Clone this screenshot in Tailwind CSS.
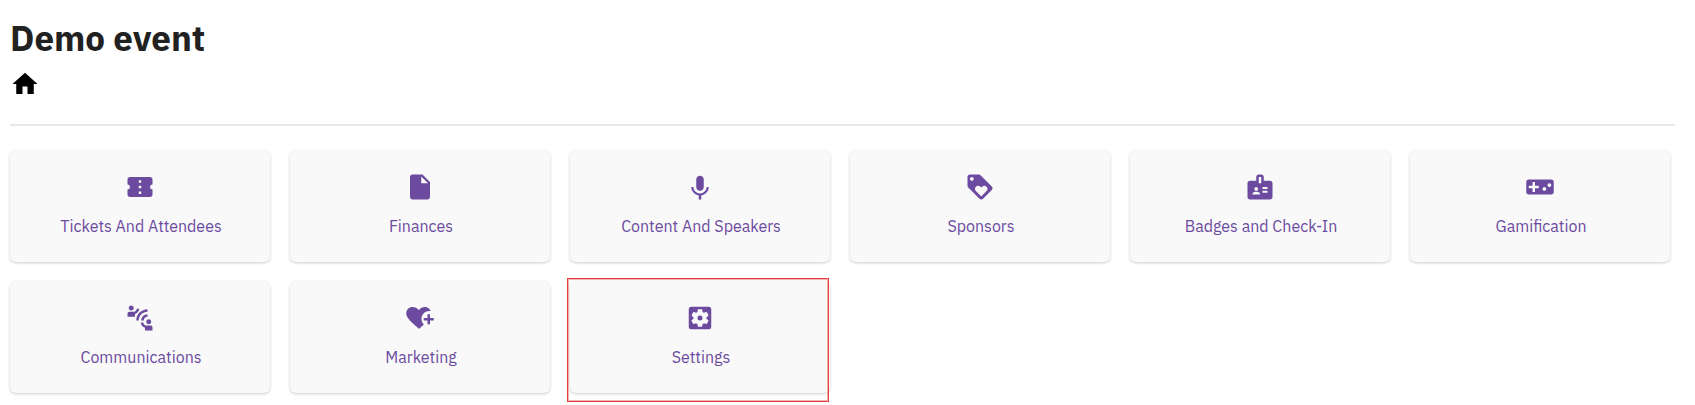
<!DOCTYPE html>
<html lang="en">
<head>
    <meta charset="UTF-8">
    <meta name="viewport" content="width=device-width, initial-scale=1.0">
    <title>Demo event</title>
    <script src="https://cdn.jsdelivr.net/npm/@tailwindcss/browser@4"></script>
</head>
<body class="bg-white font-['IBM_Plex_Sans','Open_Sans',sans-serif] text-[#212121]">
    <div class="pl-2.5 pr-5 pt-3.5 pb-3">
        <header>
            <h1 class="text-[35px] leading-12 font-bold">Demo event</h1>
            <nav class="mt-[7px]">
                <a href="#" aria-label="Home" class="inline-block align-top text-black">
                    <svg class="size-[30px]" viewBox="0 0 24 24" fill="currentColor"><path d="M10 20v-6h4v6h5v-8h3L12 3 2 12h3v8z"/></svg>
                </a>
            </nav>
        </header>

        <hr class="mt-[25px] mb-6 border-t-2 border-[#e8e8e8]">

        <main class="grid grid-cols-[repeat(auto-fill,minmax(240px,1fr))] gap-x-5 gap-y-[19px] pr-[5px] text-center text-base text-[#6b4a9f]">
            <a href="#" class="flex flex-col items-center gap-3 rounded-md bg-[#f9f9f9] pt-[22px] pb-6 shadow-[0_1px_3px_rgba(0,0,0,0.2)]">
                <svg class="size-[30px]" viewBox="0 0 24 24" fill="currentColor"><path d="M22 10V6c0-1.11-.9-2-2-2H4c-1.1 0-1.99.89-1.99 2v4c1.1 0 1.99.9 1.99 2s-.89 2-2 2v4c0 1.1.9 2 2 2h16c1.1 0 2-.9 2-2v-4c-1.1 0-2-.9-2-2s.9-2 2-2zm-9 7.5h-2v-2h2v2zm0-4.5h-2v-2h2v2zm0-4.5h-2v-2h2v2z"/></svg>
                <span class="pl-0.5">Tickets And Attendees</span>
            </a>
            <a href="#" class="flex flex-col items-center gap-3 rounded-md bg-[#f9f9f9] pt-[22px] pb-6 shadow-[0_1px_3px_rgba(0,0,0,0.2)]">
                <svg class="size-[30px]" viewBox="0 0 24 24" fill="currentColor"><path d="M6 2c-1.1 0-1.99.9-1.99 2L4 20c0 1.1.89 2 1.99 2H18c1.1 0 2-.9 2-2V8l-6-6H6zm7 7V3.5L18.5 9H13z"/></svg>
                <span class="pl-0.5">Finances</span>
            </a>
            <a href="#" class="flex flex-col items-center gap-3 rounded-md bg-[#f9f9f9] pt-[22px] pb-6 shadow-[0_1px_3px_rgba(0,0,0,0.2)]">
                <svg class="size-[30px]" viewBox="0 0 24 24" fill="currentColor"><path d="M12 15c1.66 0 2.99-1.34 2.99-3L15 6c0-1.66-1.34-3-3-3S9 4.34 9 6v6c0 1.66 1.34 3 3 3zm5.3-3c0 3-2.54 5.1-5.3 5.1S6.7 15 6.7 12H5c0 3.42 2.72 6.23 6 6.72V22h2v-3.28c3.28-.48 6-3.3 6-6.72h-1.7z"/></svg>
                <span class="pl-0.5">Content And Speakers</span>
            </a>
            <a href="#" class="flex flex-col items-center gap-3 rounded-md bg-[#f9f9f9] pt-[22px] pb-6 shadow-[0_1px_3px_rgba(0,0,0,0.2)]">
                <svg class="size-[30px]" viewBox="0 0 24 24" fill="currentColor"><path d="M21.41 11.58l-9-9C12.05 2.22 11.55 2 11 2H4c-1.1 0-2 .9-2 2v7c0 .55.22 1.05.59 1.42l9 9c.36.36.86.58 1.41.58.55 0 1.05-.22 1.41-.59l7-7c.37-.36.59-.86.59-1.41 0-.55-.23-1.06-.59-1.42zM5.5 7C4.67 7 4 6.33 4 5.5S4.67 4 5.5 4 7 4.67 7 5.5 6.33 7 5.5 7zm11.77 8.27L13 19.54l-4.27-4.27C8.28 14.81 8 14.19 8 13.5c0-1.38 1.12-2.5 2.5-2.5.69 0 1.32.28 1.77.74l.73.72.73-.73c.45-.45 1.08-.73 1.77-.73 1.38 0 2.5 1.12 2.5 2.5 0 .69-.28 1.32-.73 1.77z"/></svg>
                <span class="pl-0.5">Sponsors</span>
            </a>
            <a href="#" class="flex flex-col items-center gap-3 rounded-md bg-[#f9f9f9] pt-[22px] pb-6 shadow-[0_1px_3px_rgba(0,0,0,0.2)]">
                <svg class="size-[30px]" viewBox="0 0 24 24" fill="currentColor"><path fill-rule="evenodd" d="M20 7h-5V4c0-1.1-.9-2-2-2h-2c-1.1 0-2 .9-2 2v3H4c-1.1 0-2 .9-2 2v11c0 1.1.9 2 2 2h16c1.1 0 2-.9 2-2V9c0-1.1-.9-2-2-2zM9 12c.83 0 1.5.67 1.5 1.5S9.83 15 9 15s-1.5-.67-1.5-1.5S8.17 12 9 12zm3 6H6v-.75c0-1 2-1.5 3-1.5s3 .5 3 1.5V18zm1-9h-2V4h2v5zm5 7.5h-4V15h4v1.5zm0-3h-4V12h4v1.5z"/></svg>
                <span class="pl-0.5">Badges and Check-In</span>
            </a>
            <a href="#" class="flex flex-col items-center gap-3 rounded-md bg-[#f9f9f9] pt-[22px] pb-6 shadow-[0_1px_3px_rgba(0,0,0,0.2)]">
                <svg class="size-[30px]" viewBox="0 0 24 24" fill="currentColor"><path d="M21 6H3c-1.1 0-2 .9-2 2v8c0 1.1.9 2 2 2h18c1.1 0 2-.9 2-2V8c0-1.1-.9-2-2-2zm-10 7H8v3H6v-3H3v-2h3V8h2v3h3v2zm4.5 2c-.83 0-1.5-.67-1.5-1.5s.67-1.5 1.5-1.5 1.5.67 1.5 1.5-.67 1.5-1.5 1.5zm4-3c-.83 0-1.5-.67-1.5-1.5S18.67 9 19.5 9s1.5.67 1.5 1.5-.67 1.5-1.5 1.5z"/></svg>
                <span class="pl-0.5">Gamification</span>
            </a>
            <a href="#" class="flex flex-col items-center gap-3 rounded-md bg-[#f9f9f9] pt-[22px] pb-6 shadow-[0_1px_3px_rgba(0,0,0,0.2)]">
                <svg class="size-[30px]" viewBox="0 0 24 24" fill="currentColor"><path d="M11 14H9c0-4.97 4.03-9 9-9v2c-3.87 0-7 3.13-7 7zm7-3V9c-2.76 0-5 2.24-5 5h2c0-1.66 1.34-3 3-3zM7 4c0-1.11-.89-2-2-2s-2 .89-2 2 .89 2 2 2 2-.89 2-2zm4.45.5h-2C9.21 5.92 7.99 7 6.5 7h-3C2.67 7 2 7.67 2 8.5V11h6V8.74c1.86-.59 3.25-2.23 3.45-4.24zM19 17c1.11 0 2-.89 2-2s-.89-2-2-2-2 .89-2 2 .89 2 2 2zm1.5 1h-3c-1.49 0-2.71-1.08-2.95-2.5h-2c.2 2.01 1.59 3.65 3.45 4.24V22h6v-2.5c0-.83-.67-1.5-1.5-1.5z"/></svg>
                <span class="pl-0.5">Communications</span>
            </a>
            <a href="#" class="flex flex-col items-center gap-3 rounded-md bg-[#f9f9f9] pt-[22px] pb-6 shadow-[0_1px_3px_rgba(0,0,0,0.2)]">
                <svg class="size-[30px]" viewBox="0 0 24 24" fill="currentColor"><path d="M11 20.5l-1.2-1.1C4.5 14.6 1 11.5 1 8.3 1 5.3 3.2 3.2 6 3.2c1.9 0 3.8.9 5 2.5 1.2-1.6 3.1-2.5 5-2.5 2.1 0 3.9 1.3 4.6 3.3-3.9-.7-7.4 2.2-7.4 6.1 0 1.9.7 3.5 1.9 4.6-1 .9-2.1 1.9-3.2 2.9zM18 17v-3h-3v-2h3V9h2v3h3v2h-3v3z"/></svg>
                <span class="pl-0.5">Marketing</span>
            </a>
            <a href="#" class="relative flex flex-col items-center gap-3 rounded-md bg-[#f9f9f9] pt-[22px] pb-6 shadow-[0_1px_3px_rgba(0,0,0,0.2)]">
                <svg class="size-[30px]" viewBox="0 0 24 24" fill="currentColor"><path fill-rule="evenodd" d="M5 3h14a2 2 0 0 1 2 2v14a2 2 0 0 1-2 2H5a2 2 0 0 1-2-2V5a2 2 0 0 1 2-2zM17.25 12c0 .23-.02.46-.05.68l1.48 1.16c.13.11.17.3.08.45l-1.4 2.42c-.09.15-.27.21-.43.15l-1.74-.7c-.36.28-.75.51-1.18.69l-.26 1.85c-.03.17-.18.3-.35.3h-2.8c-.17 0-.32-.13-.35-.29l-.26-1.85c-.43-.18-.82-.41-1.18-.69l-1.74.7c-.16.06-.34 0-.43-.15l-1.4-2.42c-.09-.15-.05-.34.08-.45l1.48-1.16c-.03-.23-.05-.46-.05-.69 0-.23.02-.46.05-.68l-1.48-1.16c-.13-.11-.17-.3-.08-.45l1.4-2.42c.09-.15.27-.21.43-.15l1.74.7c.36-.28.75-.51 1.18-.69l.26-1.85c.03-.17.18-.3.35-.3h2.8c.17 0 .32.13.35.29l.26 1.85c.43.18.82.41 1.18.69l1.74-.7c.16-.06.34 0 .43.15l1.4 2.42c.09.15.05.34-.08.45l-1.48 1.16c.03.23.05.46.05.69zM12 10a2 2 0 1 0 0 4 2 2 0 0 0 0-4z"/></svg>
                <span class="pl-0.5">Settings</span>
                <!-- highlight frame -->
                <span class="pointer-events-none absolute -top-[3px] -left-[3px] right-px -bottom-[9px] border border-[#e53e3e] shadow-[inset_0_0_0_1px_rgba(229,62,62,0.4)]"></span>
            </a>
        </main>
    </div>
</body>
</html>
